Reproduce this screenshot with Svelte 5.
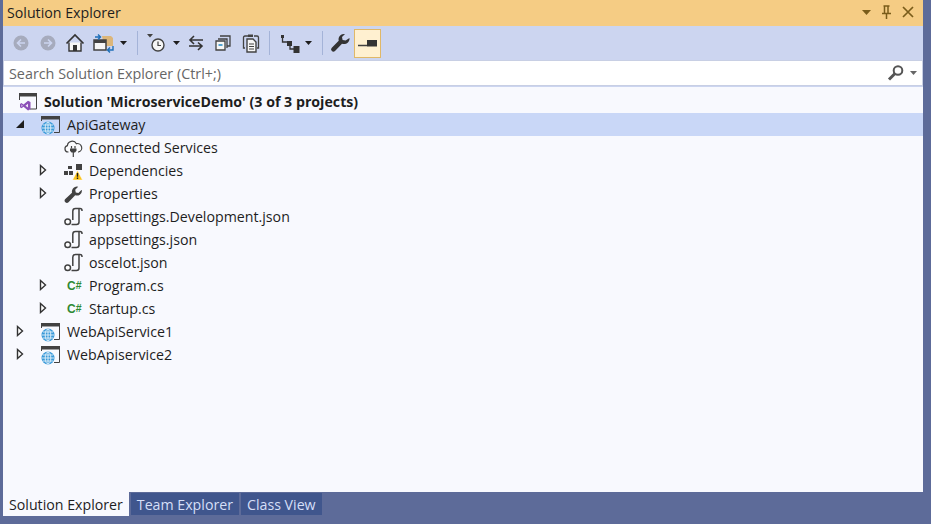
<script>
	const rows = [
		{ label: "Solution 'MicroserviceDemo' (3 of 3 projects)", icon: 'solution', iconX: 16, bold: true },
		{ label: 'ApiGateway', icon: 'web', arrow: 'open', arrowX: 12, iconX: 38, selected: true },
		{ label: 'Connected Services', icon: 'cloud', iconX: 61 },
		{ label: 'Dependencies', icon: 'deps', arrow: 'closed', arrowX: 35, iconX: 61 },
		{ label: 'Properties', icon: 'wrench', arrow: 'closed', arrowX: 35, iconX: 61 },
		{ label: 'appsettings.Development.json', icon: 'json', iconX: 61 },
		{ label: 'appsettings.json', icon: 'json', iconX: 61 },
		{ label: 'oscelot.json', icon: 'json', iconX: 61 },
		{ label: 'Program.cs', icon: 'cs', arrow: 'closed', arrowX: 35, iconX: 61 },
		{ label: 'Startup.cs', icon: 'cs', arrow: 'closed', arrowX: 35, iconX: 61 },
		{ label: 'WebApiService1', icon: 'web', arrow: 'closed', arrowX: 12, iconX: 38 },
		{ label: 'WebApiservice2', icon: 'web', arrow: 'closed', arrowX: 12, iconX: 38 }
	];
</script>

{#snippet caret()}
	<svg class="caret" width="7" height="4" viewBox="0 0 7 4"><path d="M0 0h7L3.500 4z" fill="#1e1e1e" /></svg>
{/snippet}

{#snippet sep()}
	<span class="sep"></span>
{/snippet}

{#snippet rowIcon(name)}
	<svg width="20" height="21" viewBox="0 0 20 21">
		{#if name === 'solution'}
			<path d="M.5 9V2.500h17v15.500H11" fill="none" stroke="#424242" />
			<path d="M0 2h18v3.500H0z" fill="#424242" />
			<path d="M1 13l1.500-1 2 1.500 4.500-3.800 2.500 1.200v7.400L9 19.500 4.500 15.700l-2 1.500-1.500-1z" fill="#8c4fb8" />
			<path d="M9 12.800l-2.500 1.900L9 16.600z" fill="#f4edf8" />
			<path d="M2.500 13.300v2.800l1.200-1.400z" fill="#f4edf8" />
		{:else if name === 'web'}
			<path d="M.5 7V2.500h18v16H13" fill="none" stroke="#424242" />
			<path d="M0 2h19v3.500H0z" fill="#424242" />
			<circle cx="7" cy="14" r="6.500" fill="#3a9ad9" />
			<g fill="none" stroke="#e6f3fb" stroke-width=".9">
				<ellipse cx="7" cy="14" rx="2.800" ry="6" />
				<path d="M1 14h12M2 11h10M2 17h10M7 8v12" />
			</g>
		{:else if name === 'cloud'}
			<path d="M4.500 15H4a3.200 3.200 0 0 1-.6-6.300 4.800 4.800 0 0 1 9-2A3.800 3.800 0 0 1 14.500 15H14" fill="#fbfbfd" stroke="#424242" stroke-width="1.200" />
			<path d="M7.500 9v2.500M11 9v2.500M9.300 15v5" fill="none" stroke="#424242" stroke-width="1.200" />
			<path d="M6 11.500h6.500v2.200L11 15.500H7.500L6 13.700z" fill="#424242" />
		{:else if name === 'deps'}
			<path d="M12 4h6v6h-6zM4 6h4v3H4zM0 11h4v4H0zM5 11h4v4H5z" fill="#424242" />
			<path d="M13.500 10.500l5 9.500H8.500z" fill="#fcc419" stroke="#fff" stroke-width=".5" />
			<path d="M13.500 13v3.800M13.500 17.500v1.500" stroke="#1e1e1e" stroke-width="1.400" />
		{:else if name === 'wrench'}
			<path d="M18 7.500a5 5 0 0 1-6.800 4.700L4.500 19.200a2.200 2.200 0 0 1-3.200-3.100L8 9.700A5 5 0 0 1 14.200 3.800L11.200 6.800l.6 2.600 2.600.6 3-3z" fill="#424242" />
		{:else if name === 'json'}
			<path d="M18 5V4.500Q18 2.500 16 2.500H11.500Q8.800 2.500 8.800 5.200V14" fill="none" stroke="#424242" stroke-width="1.500" />
			<path d="M15 3V16Q15 18.500 12.500 18.500H7.500" fill="none" stroke="#424242" stroke-width="1.500" />
			<circle cx="3.700" cy="15.700" r="2.800" fill="#fff" stroke="#424242" stroke-width="1.500" />
		{:else if name === 'cs'}
			<text x="3" y="15" class="csglyph">C<tspan class="hash" dy="-1">#</tspan></text>
		{/if}
	</svg>
{/snippet}

<div class="pane">
	<header class="title">
		<span>Solution Explorer</span>
		<div class="win-btns">
			<svg width="9" height="5" viewBox="0 0 9 5"><path d="M0 0h9L4.500 5z" fill="#7a5c1a" /></svg>
			<svg width="11" height="14" viewBox="0 0 11 14"><path d="M2.500 1h6M3.500 1v7M7 1v7M1 8.500h9M5.500 8.500V14" fill="none" stroke="#7a5c1a" stroke-width="1.500" /></svg>
			<svg width="12" height="12" viewBox="0 0 12 12"><path d="M1 1l10 10M11 1L1 11" stroke="#7a5c1a" stroke-width="1.700" /></svg>
		</div>
	</header>

	<div class="toolbar">
		<svg class="tb" width="22" height="22" viewBox="0 0 22 22"><circle cx="11" cy="11" r="7.500" fill="#a6abbd" /><path d="M15 11H8M11 7.500L7.500 11l3.500 3.500" fill="none" stroke="#ccd5f0" stroke-width="1.600" /></svg>
		<svg class="tb" width="22" height="22" viewBox="0 0 22 22"><circle cx="11" cy="11" r="7.500" fill="#a6abbd" /><path d="M7 11h7M11 7.500l3.500 3.500-3.500 3.500" fill="none" stroke="#ccd5f0" stroke-width="1.600" /></svg>
		<svg class="tb" width="22" height="22" viewBox="0 0 22 22"><path d="M2.500 11.500L11 3l8.500 8.500" fill="none" stroke="#333" stroke-width="1.700" /><path d="M5 10.500V19h12v-8.500" fill="#f6f6f6" stroke="#333" stroke-width="1.400" /><path d="M9 13h4v6H9z" fill="#333" /></svg>
		<span class="tbc">
			<svg width="26" height="22" viewBox="0 0 26 22">
				<path d="M11 4h9l2 2v8h-9z" fill="#dcb67a" />
				<path d="M3 8h12v10H3z" fill="#f6f6f6" stroke="#424242" stroke-width="1.500" />
				<path d="M3 8h12v3H3z" fill="#424242" />
				<path d="M4 5h5M7 2.500L9.500 5 7 7.500" fill="none" stroke="#1e6fb8" stroke-width="1.400" />
				<path d="M22 14v4h-5M19 15.500L16.500 18l2.500 2.500" fill="none" stroke="#1e6fb8" stroke-width="1.400" />
			</svg>
			{@render caret()}
		</span>
		{@render sep()}
		<span class="tbc hist">
			<svg width="24" height="22" viewBox="0 0 24 22">
				<path d="M1 2h6L4 5.500z" fill="#424242" />
				<circle cx="12" cy="13" r="6" fill="#f6f6f6" stroke="#424242" stroke-width="1.400" />
				<path d="M12 9.500V13.500h3" fill="none" stroke="#424242" stroke-width="1.200" />
			</svg>
			{@render caret()}
		</span>
		<svg class="tb swap" width="20" height="22" viewBox="0 0 20 22"><path d="M17 8H4M8 4L4 8l4 4M3 14h13M12 10.500l4 3.500-4 4" fill="none" stroke="#333" stroke-width="1.600" /></svg>
		<svg class="tb" width="22" height="22" viewBox="0 0 22 22"><path d="M8 4h10v10h-3" fill="none" stroke="#424242" stroke-width="1.300" /><path d="M6 7h9v9" fill="none" stroke="#424242" stroke-width="1.300" /><path d="M4 9h9v9H4z" fill="#f6f6f6" stroke="#424242" stroke-width="1.300" /><path d="M6.500 13h4" stroke="#1e88c7" stroke-width="1.500" /></svg>
		<svg class="tb paste" width="24" height="22" viewBox="0 0 24 22"><path d="M6 16H4.500V5.500Q4.500 4 6 4h3M15 4h3q1.500 0 1.500 1.500V16H18" fill="none" stroke="#424242" stroke-width="1.300" /><path d="M8 7h6l3 3v10H8z" fill="#f6f6f6" stroke="#424242" stroke-width="1.400" /><path d="M10 12h5M10 14.500h5M10 17h5" stroke="#424242" /><path d="M9 2.500h5V5H9z" fill="#424242" /></svg>
		{@render sep()}
		<span class="tbc">
			<svg width="24" height="22" viewBox="0 0 24 22"><path d="M3 3h3v3H3zM9 9h5v5H9zM15.500 14h6v7h-6z" fill="#333" /><path d="M4.500 5v5H10M12 13v4h4" fill="none" stroke="#333" stroke-width="1.300" /></svg>
			{@render caret()}
		</span>
		{@render sep()}
		<svg class="tb wrench" width="22" height="22" viewBox="0 0 22 22"><path d="M20.500 6a5.500 5.500 0 0 1-7.500 5.700L6 19a2.200 2.200 0 0 1-3.200-3.200L9.700 8.800A5.500 5.500 0 0 1 16 2l-3 3 .6 3 3 .6z" fill="#333" /></svg>
		<span class="active">
			<svg width="20" height="10" viewBox="0 0 20 10"><path d="M0 7.500h9" stroke="#424242" stroke-width="1.500" /><path d="M9 2h10v6.500H9z" fill="#333" /></svg>
		</span>
	</div>

	<div class="search">
		<span class="placeholder">Search Solution Explorer (Ctrl+;)</span>
		<svg width="18" height="18" viewBox="0 0 18 18"><circle cx="11" cy="6.500" r="4.300" fill="none" stroke="#555" stroke-width="2" /><path d="M8 9.500L2 15.500" stroke="#555" stroke-width="3" /></svg>
		<svg class="search-caret" width="7" height="4" viewBox="0 0 7 4"><path d="M0 0h7L3.500 4z" fill="#666" /></svg>
	</div>

	<div class="tree">
		{#each rows as row}
			<div class="row" class:selected={row.selected} class:bold={row.bold} class:web={row.icon === 'web'} style="--ix: {row.iconX}px">
				{#if row.arrow}
					<svg class="arrow" style="left: {row.arrowX}px" width="10" height="12" viewBox="0 0 10 12">
						{#if row.arrow === 'open'}
							<path d="M1 10h8V2z" fill="#1e1e1e" />
						{:else}
							<path d="M2.500 1.500v9L7.500 6z" fill="#fff" stroke="#333" stroke-width="1.400" />
						{/if}
					</svg>
				{/if}
				<span class="ic">{@render rowIcon(row.icon)}</span>
				<span class="lbl">{row.label}</span>
			</div>
		{/each}
	</div>

	<div class="tabs">
		<span class="tab on">Solution Explorer</span>
		<span class="tab">Team Explorer</span>
		<span class="tab">Class View</span>
	</div>
</div>

<style>
	:global(body) {
		background: #5d6b99;
	}

	.pane {
		width: 931px;
		height: 524px;
		box-sizing: border-box;
		padding: 0 8px 8px 3px;
		display: flex;
		flex-direction: column;
		font-family: "Open Sans", "Noto Sans", sans-serif;
		font-size: 14.2px;
		color: #1e1e1e;
		overflow: hidden;
	}

	.title {
		height: 26px;
		flex: none;
		box-sizing: border-box;
		background: #f5cc84;
		display: flex;
		align-items: center;
		justify-content: space-between;
		padding: 0 8px 2px 4px;
	}

	.win-btns {
		display: flex;
		align-items: center;
		gap: 10px;
		position: relative;
		left: -1px;
	}

	.toolbar {
		height: 34px;
		flex: none;
		background: #ccd5f0;
		display: flex;
		align-items: center;
		padding: 0 0 0 7px;
		box-sizing: border-box;
	}

	.tb {
		flex: none;
		margin-right: 5px;
	}

	.tb.swap {
		margin-right: 6px;
	}

	.tb.paste {
		margin-right: 1px;
	}

	.tb.wrench {
		margin-left: -2px;
		margin-right: 3px;
	}

	.tbc {
		display: flex;
		align-items: center;
		gap: 3px;
		margin-right: 5px;
	}

	.tbc.hist {
		margin-right: 6px;
	}

	.sep {
		width: 1px;
		height: 24px;
		background: #a4b3d8;
		margin: 0 8px 0 5px;
	}

	.active {
		width: 27px;
		height: 29px;
		box-sizing: border-box;
		background: #fff0d0;
		border: 1px solid #e0b868;
		display: flex;
		align-items: center;
		justify-content: center;
	}

	.search {
		height: 26px;
		flex: none;
		box-sizing: border-box;
		background: #fff;
		border: 1px solid #c8cfe4;
		display: flex;
		align-items: center;
		padding: 0 5px;
	}

	.placeholder {
		flex: 1;
		color: #666;
		font-size: 14.35px;
	}

	.search-caret {
		margin-left: 5px;
	}

	.tree {
		flex: 1;
		background: #f8f9fe;
		padding-top: 3px;
		border-top: 1px solid #ccd5f0;
	}

	.row {
		position: relative;
		height: 23px;
		display: flex;
		align-items: center;
		padding-left: var(--ix);
	}

	.row.selected {
		background: #c9d7f7;
	}

	.row.bold {
		font-weight: 700;
	}

	.arrow {
		position: absolute;
		top: 5px;
	}

	.ic {
		width: 20px;
		height: 21px;
		flex: none;
	}

	.ic svg {
		display: block;
	}

	.lbl {
		margin-left: 5px;
	}

	.row.web .lbl {
		margin-left: 6px;
	}

	.csglyph {
		font-family: "Liberation Sans", sans-serif;
		font-size: 12px;
		font-weight: 700;
		fill: #2f8a34;
	}

	.hash {
		font-size: 10.5px;
	}

	.tabs {
		height: 24px;
		flex: none;
		display: flex;
		align-items: flex-end;
		gap: 2px;
	}

	.tab {
		background: #40568d;
		color: #d5dff8;
		padding: 0 6px;
		display: flex;
		align-items: center;
		height: 22px;
		margin-bottom: 1px;
	}

	.tab.on {
		background: #f8f9fe;
		color: #1e1e1e;
		height: 24px;
		margin-bottom: 0;
	}
</style>
